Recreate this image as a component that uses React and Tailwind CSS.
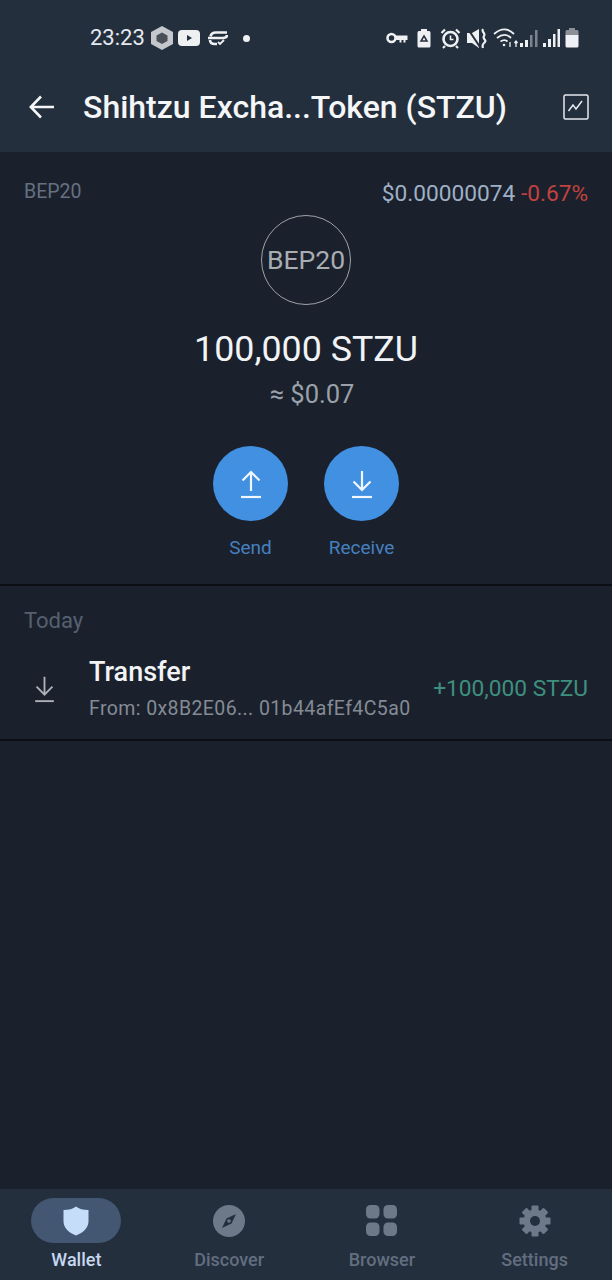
import React from "react";

const StatusLeft = () => (
  <div className="flex items-center">
    <span className="text-[22px] leading-none text-[#e4e9ef]">23:23</span>
    <svg width="24" height="26" viewBox="0 0 24 26" className="ml-[5px]">
      <path d="M12 1 23 7v12l-11 6L1 19V7z" fill="#c4c7cb" />
      <path d="M12 7.500l5.500 3v5.500L12 19l-5.500-3v-5.500z" fill="#4a4f58" />
    </svg>
    <svg width="22" height="16" viewBox="0 0 22 16" className="ml-[4px]">
      <rect width="22" height="16" rx="4" fill="#eef0f2" />
      <path d="M9 5l5 3-5 3z" fill="#242f3e" />
    </svg>
    <svg width="21" height="16" viewBox="0 0 21 16" className="ml-[7px]" fill="none" stroke="#eef0f2">
      <path d="M20 2.500H9C6 2.500 4 4 3.500 6.500" strokeWidth="2.600" />
      <path d="M1 8h15c3 0 4-1.500 4-3" strokeWidth="2.600" />
      <path d="M3 10c0 3 2 4 5 4h2" strokeWidth="2.600" />
      <path d="M11 12l2 2 4-4" strokeWidth="1.800" />
    </svg>
    <span className="ml-[15px] w-[7px] h-[7px] rounded-full bg-[#eef0f2]" />
  </div>
);

const StatusRight = () => (
  <div className="flex items-center">
    <svg width="22" height="12" viewBox="0 0 22 12" fill="none">
      <circle cx="5.500" cy="6" r="4" stroke="#eef0f2" strokeWidth="2.600" />
      <path d="M9 3.500h12.500v4.500h-2v2.500h-2V8h-2v2.500h-2V8H9z" fill="#eef0f2" />
    </svg>
    <svg width="14" height="20" viewBox="0 0 14 20" className="ml-[9px]">
      <path d="M4 1h6v2h2a1.500 1.500 0 0 1 1.500 1.500V18a1.500 1.500 0 0 1-1.500 1.500H2A1.500 1.500 0 0 1 .5 18V4.500A1.500 1.500 0 0 1 2 3h2z" fill="#eef0f2" />
      <path d="M7 8l3 5H4z" fill="none" stroke="#242f3e" strokeWidth="1.500" />
    </svg>
    <svg width="21" height="21" viewBox="0 0 21 21" className="ml-[9px]" fill="none" stroke="#eef0f2">
      <circle cx="10.500" cy="11" r="7" strokeWidth="2.600" />
      <path d="M10.500 7.500V11.500h3" strokeWidth="1.600" />
      <path d="M1.500 5 5 1.500M19.500 5 16 1.500M5 18l-2 2M16 18l2 2" strokeWidth="2.200" />
    </svg>
    <svg width="20" height="21" viewBox="0 0 20 21" className="ml-[6px]" fill="#eef0f2">
      <path d="M0 5h5l7-4v19l-7-5H0z" />
      <path d="M1 1l12 18" stroke="#242f3e" strokeWidth="2" />
      <path d="M16 1c-2 3 3 4 1 7s3 4 1 6-3 3-2 6" fill="none" stroke="#eef0f2" strokeWidth="2.200" />
    </svg>
    <svg width="25" height="21" viewBox="0 0 25 21" className="ml-[6px]" fill="none" stroke="#eef0f2" strokeWidth="1.800">
      <path d="M1 6c7-6 14-6 20 0" />
      <path d="M4 10c5-4 10-4 14 0" />
      <path d="M7.500 13.500c3-2 5-2 7 0" />
      <circle cx="11" cy="17" r="1.300" fill="#eef0f2" stroke="none" />
      <path d="M17 14v5M23 13v6M21.500 15l1.500-2 1.500 2" strokeWidth="1.300" />
    </svg>
    <svg width="18" height="20" viewBox="0 0 18 20" className="ml-[2px]">
      <rect x="0" y="15" width="3" height="4" fill="#eef0f2" />
      <rect x="5" y="12" width="3" height="7" fill="#eef0f2" />
      <rect x="10" y="7" width="2.500" height="12" fill="#7c838c" />
      <rect x="15" y="2" width="2.500" height="17" fill="#7c838c" />
    </svg>
    <svg width="17" height="20" viewBox="0 0 17 20" className="ml-[5px]">
      <rect x="0" y="15" width="3" height="4" fill="#eef0f2" />
      <rect x="5" y="11" width="3" height="8" fill="#eef0f2" />
      <rect x="10" y="6" width="2.500" height="13" fill="#eef0f2" />
      <rect x="14.500" y="1" width="2.500" height="18" fill="#eef0f2" />
    </svg>
    <svg width="14" height="20" viewBox="0 0 14 20" className="ml-[5px]">
      <path d="M4 0h6v2h2a1.500 1.500 0 0 1 1.500 1.500V7H.5V3.500A1.500 1.500 0 0 1 2 2h2z" fill="#8b9097" />
      <path d="M.5 7h13v11a1.500 1.500 0 0 1-1.500 1.500H2A1.500 1.500 0 0 1 .5 18z" fill="#eef1f5" />
    </svg>
  </div>
);

const ArrowIcon = ({ up, color, strokeWidth = 2.200, w = 24, h = 30 }) => (
  <svg width={w} height={h} viewBox="0 0 24 30" fill="none" stroke={color} strokeWidth={strokeWidth}>
    {up ? (
      <path d="M12 22V3M3.500 11.500 12 3l8.500 8.500" />
    ) : (
      <path d="M12 2v19M3.500 12.500 12 21l8.500-8.500" />
    )}
    <path d="M2 28h20" />
  </svg>
);

const ActionButton = ({ label, up }) => (
  <div className="w-[75px] flex flex-col items-center">
    <div className="w-[75px] h-[75px] rounded-full bg-[#4190e2] flex items-center justify-center">
      <ArrowIcon up={up} color="#f0f6fd" />
    </div>
    <span className="mt-[15px] text-[19px] leading-[24px] text-[#4680bf] whitespace-nowrap">{label}</span>
  </div>
);

const NavItem = ({ label, active, children }) => (
  <div className="flex-1 flex flex-col items-center">
    <div className={`w-[90px] h-[45px] rounded-full flex items-center justify-center ${active ? "bg-[#435672]" : ""}`}>
      {children}
    </div>
    <span className={`mt-[6px] text-[18px] leading-[22px] font-medium ${active ? "text-[#c6d8f0]" : "text-[#626e7f]"}`}>
      {label}
    </span>
  </div>
);

export default function App() {
  return (
    <div className="w-[612px] h-[1280px] flex flex-col bg-[#1a212d] overflow-hidden font-['Roboto',sans-serif]">
      <header className="h-[152px] shrink-0 bg-[#242f3e]">
        <div className="h-[76px] pl-[90px] pr-[33px] flex items-center justify-between">
          <StatusLeft />
          <StatusRight />
        </div>
        <div className="h-[62px] pl-[29px] pr-[23px] flex items-center">
          <svg width="26" height="26" viewBox="0 0 26 26" fill="none" stroke="#f4f6f8" strokeWidth="2.600">
            <path d="M25 13H2M12 2.500 1.800 13 12 23.500" />
          </svg>
          <h1 className="ml-[28px] flex-1 text-[32px] leading-[40px] font-medium text-[#f4f6f8] whitespace-nowrap">
            Shihtzu Excha...Token (STZU)
          </h1>
          <svg width="26" height="26" viewBox="0 0 26 26" fill="none" stroke="#e6eaef">
            <rect x="1" y="1" width="24" height="24" rx="1.500" strokeWidth="1.500" />
            <path d="M5.500 17 10 11l3 4 6-8" strokeWidth="1.500" />
          </svg>
        </div>
      </header>

      <section className="h-[432px] shrink-0 pt-[26px] px-[24px] flex flex-col items-center">
        <div className="w-full h-[30px] flex items-start justify-between">
          <span className="text-[19.500px] leading-[28px] text-[#667080]">BEP20</span>
          <span className="mt-[2px] text-[22.700px] leading-[28px]">
            <span className="text-[#9fb0c5]">$0.00000074</span>{" "}
            <span className="text-[#c2423f]">-0.67%</span>
          </span>
        </div>
        <div className="mt-[7px] w-[90px] h-[90px] rounded-full border border-[#a0a4a8] flex items-center justify-center text-[26.500px] text-[#a9adb2]">
          BEP20
        </div>
        <div className="mt-[22px] text-[35.800px] leading-[44px] text-[#f1f3f5]">100,000 STZU</div>
        <div className="mt-[7px] pl-[12px] text-[25.500px] leading-[32px] text-[#9ba1aa]">≈ $0.07</div>
        <div className="mt-[36px] flex gap-[36px]">
          <ActionButton label="Send" up />
          <ActionButton label="Receive" />
        </div>
      </section>

      <div className="h-[2px] shrink-0 bg-[#0b0f15]" />

      <section className="h-[153px] shrink-0 flex flex-col">
        <div className="pt-[21px] pl-[24px] text-[22px] leading-[28px] text-[#566070]">Today</div>
        <div className="mt-[21px] pl-[33px] pr-[24px] flex items-center">
          <ArrowIcon color="#aeb2b7" strokeWidth={2} w={23} h={28} />
          <div className="ml-[33px] flex-1">
            <div className="text-[27px] leading-[32px] font-medium text-[#f1f3f5]">Transfer</div>
            <div className="mt-[9px] text-[19.500px] leading-[24px] tracking-[0.4px] text-[#858b94] whitespace-nowrap">
              From: 0x8B2E06... 01b44afEf4C5a0
            </div>
          </div>
          <span className="text-[22.700px] leading-[28px] text-[#3f8f7f] whitespace-nowrap">+100,000 STZU</span>
        </div>
      </section>

      <div className="h-[2px] shrink-0 bg-[#0b0f15]" />

      <div className="flex-1" />

      <nav className="h-[91px] shrink-0 bg-[#242f3e] pt-[9px] pr-[1px] flex">
        <NavItem label="Wallet" active>
          <svg width="26" height="30" viewBox="0 0 26 30">
            <path d="M13 0.500c3 2.500 7 3.500 12.500 3.500V15c0 7-5 11.500-12.500 14.500C5.500 26.500.5 22 .5 15V4C6 4 10 3 13 .5z" fill="#c6ddfa" />
          </svg>
        </NavItem>
        <NavItem label="Discover">
          <svg width="32" height="32" viewBox="0 0 32 32">
            <circle cx="16" cy="16" r="16" fill="#6d7889" />
            <path d="M23 9 18.500 18.500 9 23l4.500-9.500z" fill="#242f3e" />
            <circle cx="16" cy="16" r="1.800" fill="#6d7889" />
          </svg>
        </NavItem>
        <NavItem label="Browser">
          <svg width="31" height="31" viewBox="0 0 31 31" fill="#6d7889">
            <rect x="0" y="0" width="13.500" height="13.500" rx="4.500" />
            <rect x="17.500" y="0" width="13.500" height="13.500" rx="4.500" />
            <rect x="0" y="17.500" width="13.500" height="13.500" rx="4.500" />
            <rect x="17.500" y="17.500" width="13.500" height="13.500" rx="4.500" />
          </svg>
        </NavItem>
        <NavItem label="Settings">
          <svg width="32" height="32" viewBox="0 0 32 32">
            <g fill="#6d7889">
              <circle cx="16" cy="16" r="11.500" />
              <rect x="12.500" y="0.500" width="7" height="31" rx="1" />
              <rect x="12.500" y="0.500" width="7" height="31" rx="1" transform="rotate(45 16 16)" />
              <rect x="12.500" y="0.500" width="7" height="31" rx="1" transform="rotate(90 16 16)" />
              <rect x="12.500" y="0.500" width="7" height="31" rx="1" transform="rotate(135 16 16)" />
            </g>
            <circle cx="16" cy="16" r="5" fill="#242f3e" />
          </svg>
        </NavItem>
      </nav>
    </div>
  );
}
